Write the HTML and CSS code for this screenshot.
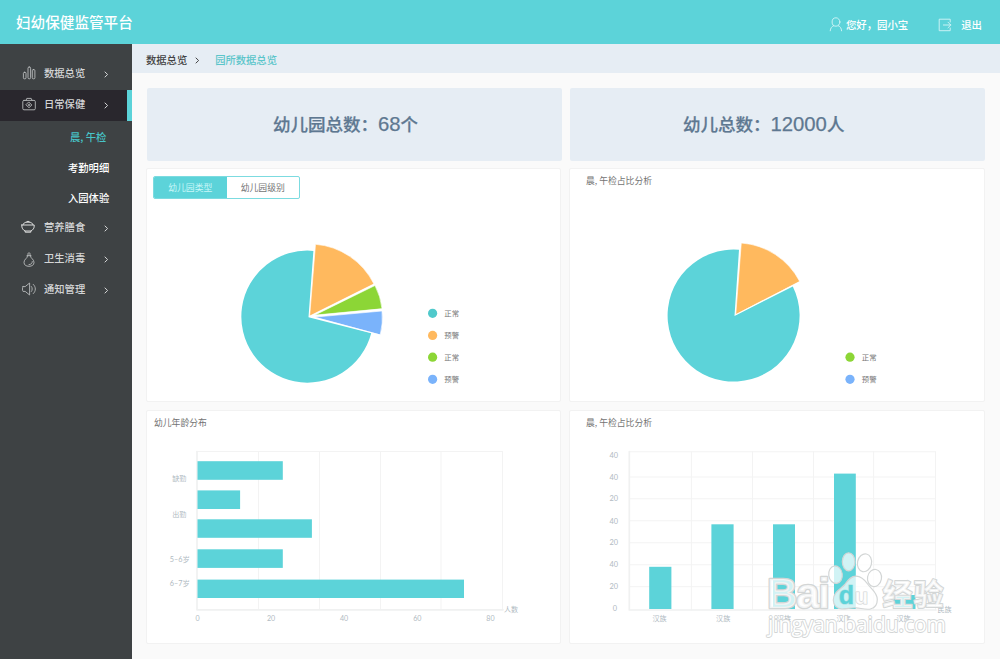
FILE: index.html
```html
<!DOCTYPE html>
<html lang="zh-CN">
<head>
<meta charset="utf-8">
<title>妇幼保健监管平台</title>
<link rel="stylesheet" href="styles.css">
</head>
<body>
<header class="topbar">
  <h1 class="brand">妇幼保健监管平台</h1>
  <div class="user">
    <svg class="icon-user" width="14" height="15" viewBox="0 0 14 15"><ellipse cx="7" cy="5" rx="3.9" ry="4.2"/><path d="M1.2 13.8C1.4 11.2 2.8 9.4 4.8 8.6M9.2 8.6C11.2 9.4 12.4 11.2 12.6 13.8"/></svg>
    <span>您好，园小宝</span>
  </div>
  <div class="logout">
    <svg class="icon-exit" width="14" height="14" viewBox="0 0 14 14"><path d="M12.2 4V1.2H1.2V12.7H12.2V10M5.4 7H12.8M10 4.2L12.8 7L10 9.8"/></svg>
    <span>退出</span>
  </div>
</header>
<div class="layout">
  <nav class="sidebar">
    <a class="item"><svg class="icon" viewBox="0 0 14 14"><rect x="1.4" y="6.3" width="2.6" height="6.5" rx="1"/><rect x="6" y="1" width="2.6" height="11.8" rx="1.2"/><rect x="10.3" y="3.6" width="2.6" height="9.2" rx="1"/></svg><span class="label">数据总览</span><svg class="arrow" viewBox="0 0 5 7"><path d="M1 1L3.6 3.5L1 6"/></svg></a>
    <a class="item active"><svg class="icon" viewBox="0 0 14 14"><rect x=".8" y="3.4" width="12.5" height="9.4" rx="1.2"/><path d="M4 3.4L4.8 1.4H9.2L10 3.4"/><path d="M7 5.2L9.8 8L7 10.8L4.2 8ZM7 7.2V8.8M6.2 8H7.8"/></svg><span class="label">日常保健</span><svg class="arrow" viewBox="0 0 5 7"><path d="M1 1L3.6 3.5L1 6"/></svg></a>
    <div class="submenu">
      <a class="subitem current">晨, 午检</a>
      <a class="subitem">考勤明细</a>
      <a class="subitem">入园体验</a>
    </div>
    <a class="item"><svg class="icon bowl" viewBox="0 0 14 14"><path d="M.8 5H13.2C13.6 8.2 11.8 10.2 9.8 11V12.2H4.2V11C2.2 10.2.4 8.2.8 5ZM2 4.8C2.4 3.2 3.8 2.4 5.2 2.2H8.8C10.2 2.4 11.6 3.2 12 4.8M5.2 2.2C5.4.9 8.6.9 8.8 2.2M4.2 11H9.8"/></svg><span class="label">营养膳食</span><svg class="arrow" viewBox="0 0 5 7"><path d="M1 1L3.6 3.5L1 6"/></svg></a>
    <a class="item"><svg class="icon bottle" viewBox="0 0 14 15"><path d="M5.6 3.8C5.8 6.4 2 7 2 10.3C2 13 4 14.3 7 14.3S12 13 12 10.3C12 7 8.2 6.4 8.4 3.8M5 3.7H9M6 3.5V1.6C6 .5 8 .5 8 1.6V3.5M7 12.6C9 12.6 10.3 11.4 10.3 9.6"/></svg><span class="label">卫生消毒</span><svg class="arrow" viewBox="0 0 5 7"><path d="M1 1L3.6 3.5L1 6"/></svg></a>
    <a class="item"><svg class="icon" viewBox="0 0 14 14"><path d="M1 4.6H3.2L7.6 1V13L3.2 9.4H1C.2 8.2.2 5.8 1 4.6ZM9.4 4.5C10.5 5.7 10.5 8.3 9.4 9.5M11.3 2.4C14.1 5 14.1 9 11.3 11.6"/></svg><span class="label">通知管理</span><svg class="arrow" viewBox="0 0 5 7"><path d="M1 1L3.6 3.5L1 6"/></svg></a>
  </nav>
  <main class="main">
    <div class="crumbs"><span>数据总览</span><svg class="arrow" viewBox="0 0 5 7"><path d="M1 1L3.6 3.5L1 6"/></svg><span class="here">园所数据总览</span></div>
    <section class="stats">
      <div class="stat schools"><span>幼儿园总数：</span><span class="num">68</span><span>个</span></div>
      <div class="stat children"><span>幼儿总数：</span><span class="num">12000</span><span>人</span></div>
    </section>
    <section class="panels">
      <article class="panel">
        <div class="head tabs-head"><div class="tabs"><span class="tab on">幼儿园类型</span><span class="tab">幼儿园级别</span></div></div>
        <svg class="chart" width="413" height="200" viewBox="147 201 413 200">
          <path class="teal" d="M308.5 317.2L313.4 250.9A66 66 0 1 0 371.2 333.3Z"/>
          <path class="orange" d="M309.7 315.8L315.5 244.3A71.8 71.8 0 0 1 373.8 283.7Z"/>
          <path class="green" d="M315 315L375 285.5A67.6 67.6 0 0 1 382 308.4Z"/>
          <path class="blue" d="M315 317.1L382 311A67.5 67.5 0 0 1 380.3 334.6Z"/>
          <circle class="legend-teal" cx="432.6" cy="313.3" r="4.6"/><circle class="orange" cx="432.6" cy="335.4" r="4.6"/><circle class="green" cx="432.6" cy="357.2" r="4.6"/><circle class="blue" cx="432.6" cy="379.3" r="4.6"/>
          <g class="legend"><text x="444.3" y="316">正常</text><text x="444.3" y="338.4">预警</text><text x="444.3" y="360">正常</text><text x="444.3" y="382.3">预警</text></g>
        </svg>
      </article>
      <article class="panel">
        <h2 class="head indent">晨, 午检占比分析</h2>
        <svg class="chart" width="414" height="200" viewBox="570 201 414 200">
          <path class="teal" d="M734.5 315.9L739 249.8A66 66 0 1 0 792.8 286.4Z"/>
          <path class="orange" d="M735.8 314.2L741.3 243A71.7 71.7 0 0 1 799.6 281.2Z"/>
          <circle class="green" cx="850" cy="357.2" r="4.6"/><circle class="blue" cx="850" cy="379.3" r="4.6"/>
          <g class="legend"><text x="861.8" y="360">正常</text><text x="861.8" y="382.3">预警</text></g>
        </svg>
      </article>
      <article class="panel">
        <h2 class="head">幼儿年龄分布</h2>
        <svg class="chart" width="413" height="200" viewBox="147 443 413 200">
          <path class="grid" d="M197 451.5H502.5M258.5 451.5V609.5M319.5 451.5V609.5M380.5 451.5V609.5M441 451.5V609.5M502.5 451.5V609.5"/>
          <path class="axis" d="M197 451.5V609.8H503"/>
          <g class="teal"><rect x="197.5" y="461.2" width="85.3" height="18.6"/><rect x="197.5" y="490.4" width="42.6" height="18.6"/><rect x="197.5" y="519.3" width="114.4" height="18.5"/><rect x="197.5" y="549.3" width="85.3" height="18.6"/><rect x="197.5" y="579.6" width="266.5" height="18.4"/></g>
          <g class="ticks"><text x="172.2" y="481.3">缺勤</text><text x="172.2" y="517.3">出勤</text><text class="range" x="169.8" y="562.3" textLength="20">5–6岁</text><text class="range" x="169.8" y="586.3" textLength="20">6–7岁</text><text x="504" y="611.7">人数</text></g>
          <g class="ticks mid"><text x="197.5" y="620.5">0</text><text x="271" y="620.5">20</text><text x="344" y="620.5">40</text><text x="417.3" y="620.5">60</text><text x="490.4" y="620.5">80</text></g>
        </svg>
      </article>
      <article class="panel">
        <h2 class="head indent">晨, 午检占比分析</h2>
        <svg class="chart" width="414" height="200" viewBox="570 443 414 200">
          <path class="grid" d="M629.5 451.8H935.5M629.5 477H935.5M629.5 498.8H935.5M629.5 520.8H935.5M629.5 542.8H935.5M629.5 564.8H935.5M629.5 586.7H935.5M691.4 451.8V610M752.5 451.8V610M813.5 451.8V610M873.6 451.8V610M935.5 451.8V610"/>
          <path class="axis" d="M629.3 451.5V610H936"/>
          <g class="teal"><rect x="649.2" y="566.8" width="22.2" height="42.2"/><rect x="711.4" y="524.3" width="22.2" height="84.7"/><rect x="773" y="524.3" width="22" height="84.7"/><rect x="834" y="473.6" width="21.8" height="135.4"/><rect x="893.5" y="595" width="22" height="14"/></g>
          <g class="ticks end"><text x="618" y="457.6">40</text><text x="618" y="479.6">40</text><text x="618" y="501.4">20</text><text x="618" y="523.5">40</text><text x="618" y="545">20</text><text x="618" y="567.3">40</text><text x="618" y="589">20</text><text x="617" y="611.2">0</text></g>
          <g class="ticks mid"><text x="659.5" y="620.8">汉族</text><text x="723.2" y="620.8">汉族</text><text x="784" y="620.8">汉族</text><text x="843.5" y="620.8">汉族</text><text x="903.5" y="620.8">汉族</text><text x="944.5" y="612">民族</text></g>
          <g class="watermark">
            <text class="wm-logo" x="767" y="608" textLength="63">Bai</text>
            <ellipse cx="835.5" cy="574.7" rx="6.8" ry="8.8" transform="rotate(-8 835.5 574.7)"/><ellipse cx="848.6" cy="561.8" rx="6.3" ry="9"/><ellipse cx="864.5" cy="562.8" rx="7" ry="9" transform="rotate(12 864.5 562.8)"/><ellipse cx="874.5" cy="578" rx="7" ry="8.6" transform="rotate(10 874.5 578)"/>
            <path d="M856 576.2C850.5 576.2 848 580.5 844.8 584.5C841 589 833.3 592 833.3 600C833.3 605.2 837 609 842 609C847 609 851 607.5 856 607.8C861 608.2 866 610 870.5 609C875 608 877.3 604 877.3 599.5C877.3 592.5 871.5 589.5 868 584.5C865 580.2 861.5 576.2 856 576.2Z"/>
            <text class="wm-d" x="838.8" y="604">d</text><text class="wm-u" x="854.8" y="603.8">u</text>
            <text class="wm-cn" x="882.5" y="604.5" textLength="61">经验</text>
            <text class="wm-url" x="768" y="632" textLength="178" lengthAdjust="spacingAndGlyphs">jingyan.baidu.com</text>
          </g>
        </svg>
      </article>
    </section>
  </main>
</div>
</body>
</html>
```
FILE: styles.css
```css
* { box-sizing: border-box; }
body { margin: 0; width: 1000px; height: 659px; overflow: hidden; background: #fafafa; font-family: "Noto Sans CJK SC", sans-serif; }
h1, h2 { margin: 0; font-weight: 400; }
svg { flex: none; fill: none; stroke-linecap: round; stroke-linejoin: round; }
.topbar { display: flex; align-items: center; height: 44px; padding: 0 18px 0 16px; background: #5cd3d9; color: #fff; font-size: 10.4px; font-weight: 500; }
.brand { flex: 1; font-size: 14.6px; font-weight: 500; line-height: 20px; padding-bottom: 1px; }
.user, .logout { display: flex; align-items: center; padding-top: 5px; line-height: 16px; }
.user { gap: 3px; margin-right: 30px; }
.logout { gap: 9px; }
.icon-user, .icon-exit { stroke: #d5f5f7; stroke-width: .9; }
.layout { display: flex; height: 615px; }
.sidebar { width: 132px; padding-top: 15px; background: #3e4244; color: #d4d5d6; }
.item { display: flex; align-items: center; height: 31px; padding: 0 0 3px 22px; font-size: 10.3px; font-weight: 500; }
.icon { width: 14px; height: 14px; stroke: #b9bbbc; stroke-width: .9; }
.bottle { height: 15px; margin-top: 3px; }
.bowl { stroke: #dadbdb; stroke-width: 1; margin: 0 1px 0 -1px; }
.label { width: 60px; margin-left: 8px; line-height: 16px; white-space: nowrap; }
.arrow { width: 5px; height: 7px; margin-top: 2px; stroke: currentColor; stroke-width: 1; }
.active { background: #29272d; border-right: 5.5px solid #5cd3d9; }
.submenu { height: 92px; }
.subitem { display: block; height: 30.7px; line-height: 31px; padding-left: 68px; font-size: 10.3px; font-weight: 500; color: #fff; white-space: nowrap; }
.current { color: #47c4c8; padding-left: 70px; }
.main { width: 868px; }
.crumbs { display: flex; align-items: center; height: 29px; padding: 2px 0 0 14px; background: #e6edf4; color: #444; font-size: 10.3px; font-weight: 500; }
.crumbs .arrow { margin: 1px 15px 0 8px; }
.here { color: #5bc5ca; }
.stats { display: grid; grid-template-columns: 415px 415px; gap: 8px; padding: 15px 0 0 15px; }
.stat { display: flex; align-items: center; height: 73px; padding-bottom: 1px; border-radius: 2px; background: #e6edf4; color: #5e7891; font-size: 17.5px; font-weight: 500; line-height: 26px; -webkit-text-stroke: .25px #5e7891; }
.schools { padding-left: 126px; }
.children { padding-left: 113px; }
.num { font-family: "Liberation Sans", sans-serif; font-size: 20.3px; font-weight: 400; }
.panels { display: grid; grid-template-columns: 415px 416px; grid-auto-rows: 234px; gap: 8px; padding: 7px 0 0 14px; }
.panel { border: 1px solid #f2f2f2; border-radius: 2px; background: #fff; }
.head { height: 32px; padding: 4px 0 0 7px; color: #737373; font-size: 8.8px; line-height: 15px; }
.indent { padding-left: 16px; }
.tabs-head { padding-top: 7px; padding-left: 6px; }
.tabs { display: flex; width: 147px; height: 23px; border: 1px solid #7cdbe0; border-radius: 2px; overflow: hidden; }
.tab { flex: 1; text-align: center; line-height: 21px; }
.on { background: #5cd3d9; color: #c9f7f8; }
.chart { display: block; }
.teal { fill: #5cd3d9; }
.legend-teal { fill: #50c9cb; }
.orange { fill: #ffb95e; }
.green { fill: #8cd636; }
.blue { fill: #7ab3fb; }
path.orange, path.green, path.blue { stroke: #fff; stroke-width: .6; }
.legend { fill: #777; font-size: 7.4px; }
.grid { stroke: #f3f3f3; stroke-width: 1; }
.axis { stroke: #f0f1f1; stroke-width: 1.7; }
.ticks { fill: #b0bac2; font-family: Lato, "Noto Sans CJK SC", sans-serif; font-size: 7.1px; }
.range { font-size: 7.3px; }
.mid { text-anchor: middle; }
.end { text-anchor: end; font-size: 7.4px; }
.watermark { fill: rgba(255,255,255,.72); stroke: #d3d6d6; stroke-width: 1.2; }
.watermark text { paint-order: stroke; }
.watermark .wm-logo { font: bold 42px "Liberation Sans", sans-serif; stroke-width: 2.6; }
.watermark .wm-d { font: bold 25px "Liberation Sans", sans-serif; fill: #5cd3d9; stroke: #a9dfe2; }
.wm-u { font: bold 22px "Liberation Sans", sans-serif; }
.watermark .wm-cn { font: bold 30px "Noto Sans CJK SC", sans-serif; stroke-width: 2; }
.watermark .wm-url { font: 21px "Open Sans", sans-serif; stroke-width: 1.8; fill: #fff; }
```
